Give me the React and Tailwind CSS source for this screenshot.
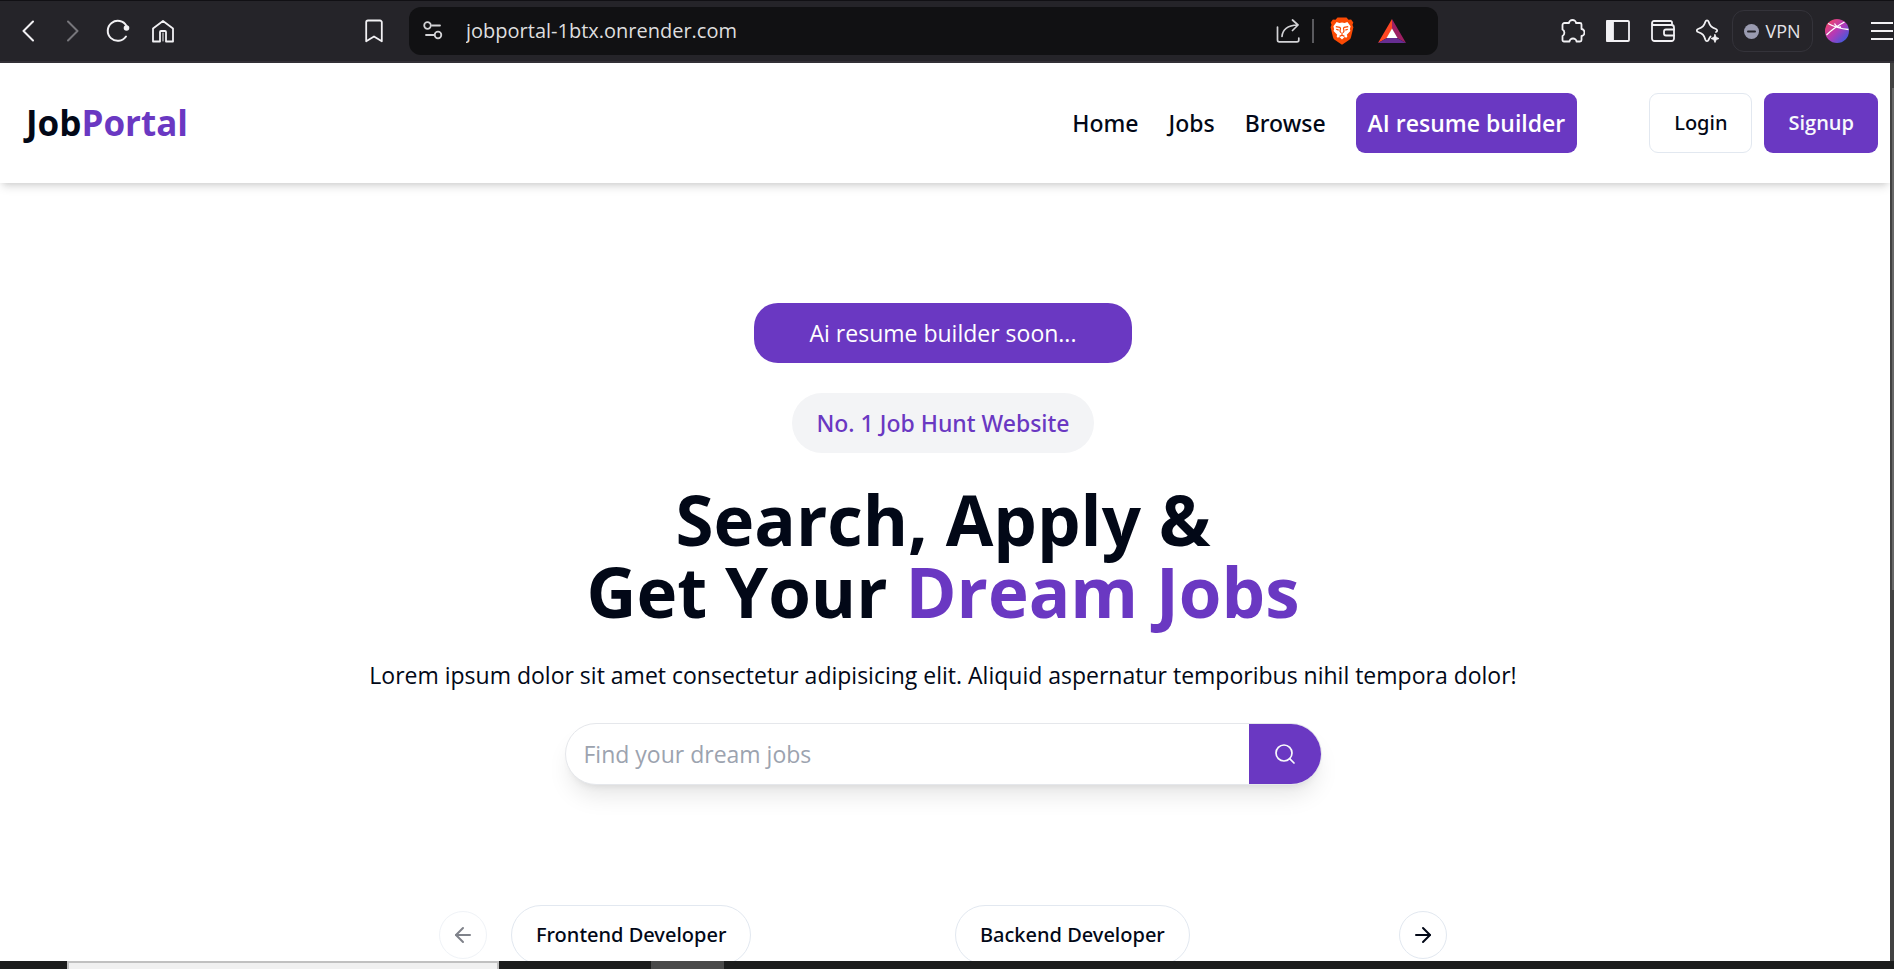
import React from "react";
import { ArrowLeft, ArrowRight, Search } from "lucide-react";

function Stroke({ children, w = 24, h = 24, sw = 1.8, className = "" }) {
  return (
    <svg
      width={w}
      height={h}
      viewBox={`0 0 ${w} ${h}`}
      fill="none"
      stroke="currentColor"
      strokeWidth={sw}
      strokeLinecap="round"
      strokeLinejoin="round"
      className={`shrink-0 ${className}`}
      aria-hidden="true"
    >
      {children}
    </svg>
  );
}

function BarButton({ label, dim, children }) {
  return (
    <button
      type="button"
      aria-label={label}
      className={`flex h-12 w-[45px] shrink-0 items-center justify-center ${dim ? "text-[#77767b]" : "text-[#f2f1f4]"}`}
    >
      {children}
    </button>
  );
}

function BraveIcon() {
  return (
    <svg width="24" height="28" viewBox="0 0 24 28" aria-hidden="true">
      <path
        d="M7.5 0.5h9l2 2.3 2.6-.3 2.2 3-.8 2.3.9 2.4-2.4 10c-.3 1.200-1 2.200-2 2.900L12 27.700 5 23.100c-1-.7-1.700-1.700-2-2.900l-2.400-10 .9-2.400-.8-2.300 2.200-3 2.600.3z"
        fill="#fb4a04"
      />
      <path
        d="M12 5.500l2.600.5 2.800-.9 3.200 4.200-.7 2.600.5 2-3.600 3.800.6 1.600-1 1.500-1.800-.7-2.600 2.300-2.600-2.300-1.800.7-1-1.500.6-1.600-3.600-3.800.5-2-.7-2.600 3.200-4.200 2.800.9z"
        fill="#fff"
      />
      <path
        d="M5.800 9.600l4 .8.700.8-.5 3 .8 1.500M18.200 9.600l-4 .8-.7.800.5 3-.8 1.500M6.200 12.200l2.500.9M17.800 12.200l-2.500.9M12 15.600v2.600M9.500 19.400l2.500-1.300 2.500 1.300"
        fill="none"
        stroke="#fb4a04"
        strokeWidth="1.200"
      />
    </svg>
  );
}

function TriangleIcon() {
  return (
    <svg width="28" height="24" viewBox="0 0 28 24" aria-hidden="true">
      <path d="M14 0L0 24l9-5 5-9z" fill="#ff4724" />
      <path d="M14 0l14 24-9-5-5-9z" fill="#9e1f63" />
      <path d="M0 24h28l-9-5H9z" fill="#662d91" />
      <path d="M14 9.500l5.500 9.500h-11z" fill="#fff" />
    </svg>
  );
}

function GlobeIcon() {
  return (
    <svg width="24" height="24" viewBox="0 0 24 24" aria-hidden="true">
      <defs>
        <linearGradient id="globe" x1="0.100" y1="0.100" x2="0.900" y2="0.900">
          <stop offset="0" stopColor="#f0436a" />
          <stop offset="0.500" stopColor="#b23ab8" />
          <stop offset="1" stopColor="#3b5be0" />
        </linearGradient>
      </defs>
      <circle cx="12" cy="12" r="12" fill="url(#globe)" />
      <path d="M3 4.500Q12 9.500 23.500 10.500M1.500 16Q9 8.500 19.500 3M9.500 4.500Q12 9 16 8" fill="none" stroke="#fff" strokeWidth="1.300" />
    </svg>
  );
}

function BrowserBar() {
  return (
    <div className="flex h-[63px] shrink-0 items-center border-t border-b-2 border-t-[#111014] border-b-[#323036] bg-[#252429] pl-[5px]">
      <BarButton label="Back">
        <Stroke w={12} h={22} sw={2}>
          <path d="M11 1.500L1.500 11l9.500 9.500" />
        </Stroke>
      </BarButton>
      <BarButton label="Forward" dim>
        <Stroke w={12} h={22} sw={2}>
          <path d="M1 1.500L10.500 11 1 20.500" />
        </Stroke>
      </BarButton>
      <BarButton label="Reload">
        <Stroke sw={2}>
          <path d="M20 17.500A10 10 0 1 1 20.500 7" />
          <circle cx="20.500" cy="9" r="2.800" fill="currentColor" stroke="none" />
        </Stroke>
      </BarButton>
      <BarButton label="Home">
        <Stroke sw={1.800}>
          <path d="M2 9.500L12 2l10 7.500v13h-7v-9.500a1 1 0 0 0-1-1h-4a1 1 0 0 0-1 1v9.500H2z" />
          <path d="M12 14v8" strokeWidth="1" />
        </Stroke>
      </BarButton>
      <div className="ml-[166px] mr-[13px] flex">
        <BarButton label="Bookmark this page">
          <Stroke w={18} h={24}>
            <path d="M3 1.500h12a1.800 1.800 0 0 1 1.800 1.800v19L9 17.500l-7.800 4.800v-19A1.800 1.800 0 0 1 3 1.500z" />
          </Stroke>
        </BarButton>
      </div>
      <div className="mr-[112px] flex h-12 min-w-0 flex-1 items-center rounded-xl bg-[#111113] pl-[14px] pr-8 text-[#d3d3d6]">
        <Stroke w={20} h={20}>
          <circle cx="4.500" cy="4.500" r="3.300" />
          <path d="M9 4.500h8M3 14h8" />
          <circle cx="15" cy="14" r="3.300" />
        </Stroke>
        <input
          aria-label="Address"
          defaultValue="jobportal-1btx.onrender.com"
          className="ml-[23px] min-w-0 flex-1 bg-transparent text-[20px] leading-7 text-[#dededf] outline-none"
        />
        <button type="button" aria-label="Share" className="shrink-0">
          <Stroke w={24} h={24} sw={1.700}>
            <path d="M1.500 8v13a1.800 1.800 0 0 0 1.800 1.800H21a1.800 1.800 0 0 0 1.800-1.800v-2" />
            <path d="M6 17.500C6.500 10.500 12 6.500 21.500 6M16.500 1l5.500 5-5.500 5.500" />
          </Stroke>
        </button>
        <span className="ml-3 mr-4 h-6 w-[2px] shrink-0 bg-[#5a5a5e]" />
        <button type="button" aria-label="Brave Shields" className="shrink-0">
          <BraveIcon />
        </button>
        <button type="button" aria-label="Brave Rewards" className="ml-6 shrink-0">
          <TriangleIcon />
        </button>
      </div>
      <BarButton label="Extensions">
        <Stroke w={24} h={24}>
          <path d="M3.500 4H8a3.500 3 0 0 1 7 0h4a1.500 1.500 0 0 1 1.500 1.500V10a3 3.500 0 0 1 0 7v4a1.500 1.500 0 0 1-1.500 1.500h-3.500a3.500 3 0 0 0-7 0H3A1.500 1.500 0 0 1 1.500 21v-4a3 3.500 0 0 0 0-6.500V6a2 2 0 0 1 2-2z" />
        </Stroke>
      </BarButton>
      <BarButton label="Sidebar">
        <Stroke w={24} h={22}>
          <rect x="1" y="1" width="22" height="20" rx="1" />
          <path d="M1 1h6v20H1z" fill="currentColor" />
        </Stroke>
      </BarButton>
      <BarButton label="Wallet">
        <Stroke w={24} h={22}>
          <path d="M21 5V2.500A1.500 1.500 0 0 0 19.500 1H3a2 2 0 0 0-2 2v15.500A2.500 2.500 0 0 0 3.500 21h17a2.500 2.500 0 0 0 2.500-2.500v-11A2.500 2.500 0 0 0 20.500 5H3a2 2 0 0 1-2-2" />
          <path d="M23 9.500h-8a2 2 0 0 0-2 2v2a2 2 0 0 0 2 2h8" />
        </Stroke>
      </BarButton>
      <BarButton label="Leo AI">
        <Stroke w={24} h={24}>
          <path d="M14.500 17.500c-.8 1-1.300 2-2 3.500-.5 1.500-2.500 1.500-3 0C8 16 6.500 14.500 2 13c-1.500-.5-1.500-2.500 0-3C6.500 8.500 8 7 9.500 2.500c.5-1.500 2.500-1.500 3 0C14 7 15.500 8.500 20 10c1.500.5 1.500 2.500 0 3" />
          <path d="M19 15.500l1.200 2.800 2.800 1.200-2.800 1.200L19 23.500l-1.200-2.800-2.800-1.200 2.800-1.200z" fill="currentColor" strokeWidth="0.800" />
        </Stroke>
      </BarButton>
      <button
        type="button"
        className="ml-[2px] flex h-[42px] w-[81px] shrink-0 items-center justify-center gap-[6px] rounded-xl border border-[#34333a] text-[18px] text-[#e4e3e8]"
      >
        <svg width="15" height="15" viewBox="0 0 15 15" aria-hidden="true">
          <circle cx="7.500" cy="7.500" r="7.500" fill="#9a9bb0" />
          <path d="M4 7.500h7" stroke="#252429" strokeWidth="2" strokeLinecap="round" />
        </svg>
        VPN
      </button>
      <button type="button" aria-label="Profile" className="ml-3 shrink-0">
        <GlobeIcon />
      </button>
      <button type="button" aria-label="Menu" className="ml-[22px] mr-px shrink-0 text-[#f2f1f4]">
        <svg width="22" height="18" viewBox="0 0 22 18" aria-hidden="true">
          <path d="M0 1h22M0 9h22M0 17h22" stroke="currentColor" strokeWidth="2" />
        </svg>
      </button>
    </div>
  );
}

function SiteHeader() {
  return (
    <header className="flex h-[120px] shrink-0 items-center justify-between bg-white pl-[26px] pr-3 shadow-[0_6px_9px_-2px_rgba(0,0,0,0.12),0_3px_6px_-3px_rgba(0,0,0,0.12)]">
      <h1 className="text-[35px] font-bold leading-[42px]">
        Job<span className="text-[#6a38c2]">Portal</span>
      </h1>
      <div className="flex items-center gap-[72px]">
        <nav className="flex items-center gap-[30px] font-['Noto_Sans','Open_Sans',sans-serif] text-[23px] font-medium leading-9">
          <a href="#home">Home</a>
          <a href="#jobs">Jobs</a>
          <a href="#browse">Browse</a>
          <a
            href="#resume"
            className="rounded-[9px] bg-[#6a38c2] px-3 py-3 font-['Open_Sans','Noto_Sans',sans-serif] font-semibold text-white"
          >
            AI resume builder
          </a>
        </nav>
        <div className="flex items-center gap-3 font-['Noto_Sans','Open_Sans',sans-serif] text-[20px] font-medium">
          <button type="button" className="h-[60px] rounded-[9px] border border-[#e2e8f0] px-6">
            Login
          </button>
          <button
            type="button"
            className="h-[60px] rounded-[9px] bg-[#6a38c2] px-6 font-['Open_Sans','Noto_Sans',sans-serif] font-semibold text-[#f8fafc]"
          >
            Signup
          </button>
        </div>
      </div>
    </header>
  );
}

function Hero() {
  return (
    <section className="flex flex-col items-center gap-[30px] pr-1 pt-[120px] text-center">
      <span className="rounded-3xl bg-[#6a38c2] px-14 py-3 text-[23px] leading-9 text-white">
        Ai resume builder soon...
      </span>
      <span className="rounded-full bg-[#f3f4f6] px-6 py-3 font-['Noto_Sans','Open_Sans',sans-serif] text-[23px] font-medium leading-9 text-[#6a38c2]">
        No. 1 Job Hunt Website
      </span>
      <h2 className="text-[69px] font-bold leading-[72px]">
        Search, Apply &amp;
        <br />
        Get Your <span className="text-[#6a38c2]">Dream Jobs</span>
      </h2>
      <p className="text-[23px] leading-9">
        Lorem ipsum dolor sit amet consectetur adipisicing elit. Aliquid aspernatur temporibus nihil tempora dolor!
      </p>
      <form className="flex h-[62px] w-full max-w-[757px] items-stretch overflow-hidden rounded-full border border-[#e5e7eb] bg-white pl-[18px] shadow-[0_15px_23px_-5px_rgba(0,0,0,0.1),0_6px_9px_-6px_rgba(0,0,0,0.1)]">
        <input
          type="text"
          aria-label="Find your dream jobs"
          placeholder="Find your dream jobs"
          className="min-w-0 flex-1 text-[23px] leading-9 outline-none placeholder:text-[#9ca3af]"
        />
        <button
          type="button"
          aria-label="Search"
          className="flex w-[72px] items-center justify-center bg-[#6a38c2] text-[#f8fafc]"
        >
          <Search size={24} strokeWidth={1.700} />
        </button>
      </form>
    </section>
  );
}

function Categories() {
  return (
    <section className="mt-[120px] flex items-start justify-center gap-6 pr-1">
      <button
        type="button"
        aria-label="Previous slide"
        disabled
        className="mt-[6px] flex size-12 items-center justify-center rounded-full border border-[#e2e8f0] opacity-50"
      >
        <ArrowLeft size={24} strokeWidth={2} />
      </button>
      <div className="grid w-[864px] grid-cols-[444px_1fr] items-start justify-items-start font-['Noto_Sans','Open_Sans',sans-serif] text-[20px] font-medium">
        <button type="button" className="h-[60px] rounded-full border border-[#e2e8f0] px-6">
          Frontend Developer
        </button>
        <button type="button" className="h-[60px] rounded-full border border-[#e2e8f0] px-6">
          Backend Developer
        </button>
      </div>
      <button
        type="button"
        aria-label="Next slide"
        className="mt-[6px] flex size-12 items-center justify-center rounded-full border border-[#e2e8f0]"
      >
        <ArrowRight size={24} strokeWidth={2} />
      </button>
    </section>
  );
}

export default function App() {
  return (
    <div className="flex h-screen flex-col overflow-hidden bg-white font-['Open_Sans','Noto_Sans',sans-serif] text-[#020817]">
      <BrowserBar />
      <div className="flex min-h-0 flex-1">
        <div className="min-w-0 flex-1 overflow-hidden">
          <SiteHeader />
          <main>
            <Hero />
            <Categories />
          </main>
        </div>
        <div className="w-1 shrink-0 bg-[#424242] pl-[2px] pt-[25px]">
          <div className="h-[502px] bg-[#686868]" />
        </div>
      </div>
      <div className="flex h-2 shrink-0 bg-[#1c1d1d] pl-[67px]">
        <div className="w-[432px] border-x-2 border-t-2 border-[#c0c0c0] bg-[#f0f0f0]" />
        <div className="ml-[152px] w-[73px] bg-[#4a4a4a]" />
      </div>
    </div>
  );
}
